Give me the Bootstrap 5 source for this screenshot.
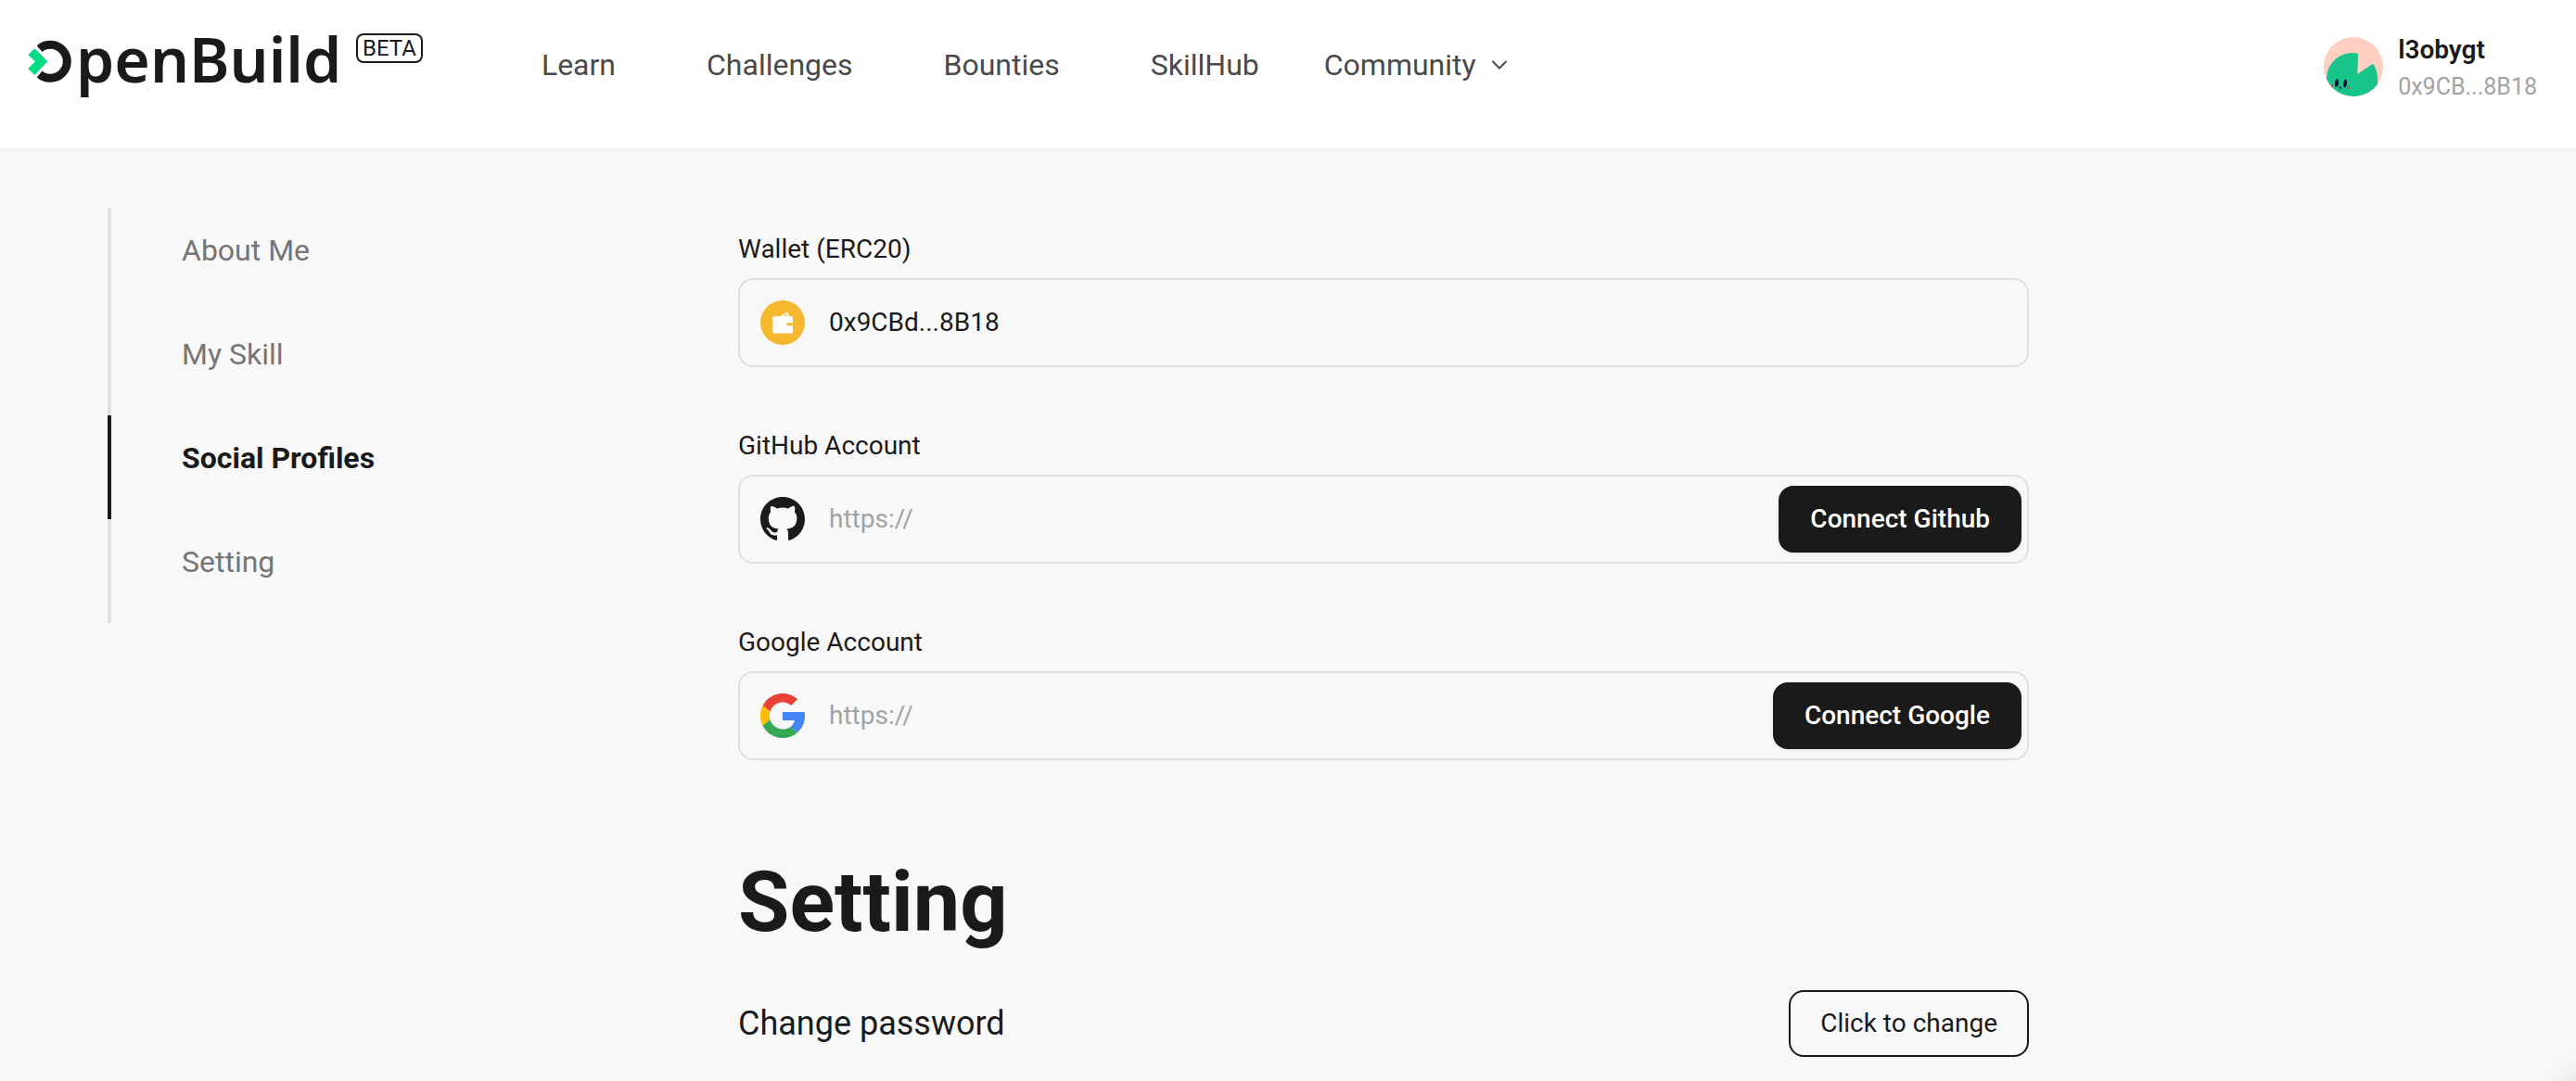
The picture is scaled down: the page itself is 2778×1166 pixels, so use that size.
<!DOCTYPE html>
<html lang="en">
<head>
<meta charset="utf-8">
<meta name="viewport" content="width=device-width, initial-scale=1">
<title>OpenBuild - Social Profiles</title>
<link href="https://cdn.jsdelivr.net/npm/bootstrap@5.3.0/dist/css/bootstrap.min.css" rel="stylesheet">
<style>
  :root { --ink: #1a1a1a; --line: #e1e1e1; --page: #f8f8f8; }
  body { font-family: Roboto, "Open Sans", sans-serif; font-size: 28px; color: var(--ink); background: var(--page); min-height: 100vh; }

  .topbar { height: 162px; padding: 16px 42px 0 30px; border-bottom: 2px solid #f0f0f0; }
  .brand-logo { width: 338px; height: 96px; display: block; overflow: visible; }
  .brand-logo text { font-family: "Noto Sans", sans-serif; font-weight: 600; font-size: 66px; fill: var(--ink); }
  .beta-tag { height: 32px; margin-top: 20px; padding: 0 5px; border: 2px solid var(--ink); border-radius: 8px; font-size: 24px; line-height: 29px; color: var(--ink); }
  .main-nav { gap: 98px; margin-left: 128px; line-height: 48px; font-size: 32px; margin-top: 30px; }
  .main-nav a, .main-nav button { color: #4a4a4a; text-decoration: none; }
  .main-nav button { font-size: 32px; line-height: 48px; margin-left: -28px; gap: 16px; }
  .user-box { gap: 16px; margin-top: 20px; }
  .user-box svg { margin-top: 4px; }
  .user-name { font-weight: 600; line-height: 36px; }
  .user-addr { font-size: 25px; line-height: 40px; margin-top: 2px; color: #a3a3a3; }

  .page-body { padding: 62px 116px 24px; }
  .side-nav { flex: 0 0 680px; }
  .side-nav a { display: block; height: 112px; padding: 22px 0 0 76px; border-left: 4px solid var(--line); font-size: 32px; line-height: 48px; color: #757575; text-decoration: none; }
  .side-nav a.active { border-color: var(--ink); color: var(--ink); font-weight: 700; }

  .settings-col { max-width: 1392px; padding-top: 24px; }
  .field-group { margin-bottom: 64px; }
  .field-group label { display: block; line-height: 42px; margin-bottom: 10px; }
  .field-box { height: 96px; border: 2px solid var(--line); border-radius: 16px; padding: 0 6px 0 22px; gap: 26px; }
  .field-box input { color: var(--ink); font-size: 28px; outline: 0; min-width: 0; }
  .field-box input::placeholder { color: #a3a3a3; opacity: 1; }
  .act-btn { height: 72px; border-radius: 16px; font-size: 28px; padding: 0 34px; border: 0; white-space: nowrap; }
  .act-dark { background: var(--ink); color: #fff; font-weight: 500; box-shadow: 0 2px 4px rgba(0,0,0,.06); }
  .act-line { border: 2px solid var(--ink); color: var(--ink); padding: 0 32px; }
  .section-title { font-size: 90px; line-height: 96px; font-weight: 700; margin: 106px 0 46px; }
  .row-title { font-size: 36px; line-height: 54px; font-weight: 400; }
  .chat-launcher { position: fixed; right: -48px; bottom: -48px; width: 48px; height: 48px; border-radius: 50%; box-shadow: 0 0 40px rgba(0,0,0,.3); }
</style>
</head>
<body>
<header class="topbar bg-white d-flex align-items-start">
  <a href="#" class="d-flex align-items-start text-decoration-none" aria-label="OpenBuild home">
    <svg class="brand-logo" viewBox="30 16 338 96">
      <path d="M42.6 52.6A18 18 0 1 1 42.6 80" fill="none" stroke="#1a1a1a" stroke-width="9"/>
      <path d="M30.300 59.300l7-7 14 14-14 14.700-7-7 7.700-7.700z" fill="#00dc82"/>
      <text x="82" y="89">penBuild</text>
    </svg>
    <span class="beta-tag ms-3">BETA</span>
  </a>
  <nav class="main-nav d-flex">
    <a href="#">Learn</a>
    <a href="#">Challenges</a>
    <a href="#">Bounties</a>
    <a href="#">SkillHub</a>
    <button type="button" class="border-0 bg-transparent p-0 d-flex align-items-center">Community
      <svg width="18" height="12" viewBox="0 0 18 12" fill="none" stroke="#4a4a4a" stroke-width="2"><path d="M1.500 2l7.500 7.500L16.500 2"/></svg>
    </button>
  </nav>
  <div class="user-box d-flex ms-auto">
    <svg width="64" height="64" viewBox="0 0 64 64" role="img" aria-label="Avatar">
      <clipPath id="face"><circle cx="32" cy="32" r="32"/></clipPath>
      <g clip-path="url(#face)">
        <path fill="#ffd0c2" d="M0 0h64v64H0z"/>
        <path fill="#17c58b" d="M37 17.800L36.300 40 53 28.700A27.500 27.500 0 0 1 58 44.500V64H3V44.500A27.500 27.500 0 0 1 37 17.800z"/>
        <ellipse cx="14" cy="49.500" rx="1.900" ry="4.200" fill="#0b0b3a" transform="rotate(8 14 49.500)"/>
        <ellipse cx="23" cy="50" rx="1.900" ry="4.200" fill="#0b0b3a" transform="rotate(8 23 50)"/>
        <path d="M16 54.500q1.500-1.500 2.800 0q-.5 2-1.500 2.200" fill="none" stroke="#0b0b3a"/>
        <circle cx="9" cy="52.700" r="1.300" fill="#f33"/><circle cx="26.300" cy="55" r="1.300" fill="#f33"/>
      </g>
    </svg>
    <div>
      <div class="user-name">l3obygt</div>
      <div class="user-addr">0x9CB...8B18</div>
    </div>
  </div>
</header>

<div class="page-body d-flex align-items-start">
  <nav class="side-nav">
    <a href="#about">About Me</a>
    <a href="#skill">My Skill</a>
    <a href="#social" class="active" aria-current="true">Social Profiles</a>
    <a href="#setting">Setting</a>
  </nav>
  <main class="settings-col flex-grow-1">
    <div class="field-group">
      <label for="wallet">Wallet (ERC20)</label>
      <div class="field-box d-flex align-items-center">
        <svg width="48" height="48" viewBox="0 0 48 48" class="flex-shrink-0">
          <circle cx="24" cy="24" r="24" fill="#f4b92e"/>
          <path fill="#fff" d="M15 17h6.500l6-3.800q1.500-.7 2.300.6l1.200 3.200H33q2 0 2 2v5.200h-5.300a1.500 1.500 0 0 0 0 3H35V33.500q0 2-2 2H15q-2 0-2-2V19q0-2 2-2z"/>
          <path fill="#f4b92e" d="M24.500 17l3.400-2.200.9 2.200z"/>
        </svg>
        <input id="wallet" type="text" class="border-0 bg-transparent p-0 flex-grow-1" value="0x9CBd...8B18" readonly>
      </div>
    </div>
    <div class="field-group">
      <label for="github">GitHub Account</label>
      <div class="field-box d-flex align-items-center">
        <svg width="48" height="48" viewBox="0 0 16 16" fill="#1a1a1a" class="flex-shrink-0"><path d="M8 0C3.580 0 0 3.580 0 8c0 3.540 2.290 6.530 5.470 7.590.4.070.55-.17.55-.38 0-.19-.01-.82-.01-1.490-2.010.37-2.530-.49-2.690-.94-.09-.23-.48-.94-.82-1.130-.28-.15-.68-.52-.01-.53.63-.01 1.080.58 1.230.82.72 1.210 1.870.87 2.330.66.070-.52.28-.87.51-1.070-1.780-.2-3.640-.89-3.640-3.950 0-.87.31-1.590.82-2.150-.08-.2-.36-1.020.08-2.120 0 0 .67-.21 2.200.82.64-.18 1.320-.27 2-.27s1.360.09 2 .27c1.530-1.040 2.200-.82 2.200-.82.44 1.100.16 1.920.08 2.120.51.56.82 1.270.82 2.150 0 3.070-1.870 3.750-3.650 3.950.29.25.54.73.54 1.480 0 1.070-.01 1.930-.01 2.200 0 .21.15.46.55.38A8.010 8.010 0 0 0 16 8c0-4.420-3.580-8-8-8"/></svg>
        <input id="github" type="text" class="border-0 bg-transparent p-0 flex-grow-1" placeholder="https://">
        <button type="button" class="btn act-btn act-dark">Connect Github</button>
      </div>
    </div>
    <div class="field-group">
      <label for="google">Google Account</label>
      <div class="field-box d-flex align-items-center">
        <svg width="48" height="48" viewBox="0 0 48 48" class="flex-shrink-0">
          <path fill="#ea4335" d="M24 9.500c3.540 0 6.710 1.220 9.210 3.600l6.850-6.850C35.900 2.380 30.470 0 24 0 14.620 0 6.510 5.380 2.560 13.220l7.980 6.190C12.430 13.720 17.740 9.500 24 9.500z"/>
          <path fill="#4285f4" d="M48 24.550c0-1.570-.15-3.090-.38-4.550H24v9.020h12.940c-.58 2.960-2.260 5.480-4.780 7.180l7.730 6C44.400 38.020 48 31.840 48 24.550z"/>
          <path fill="#fbbc05" d="M10.530 28.590c-.48-1.450-.76-2.990-.76-4.590s.27-3.140.76-4.590l-7.980-6.190C.92 16.460 0 20.120 0 24c0 3.880.92 7.540 2.560 10.780l7.970-6.190z"/>
          <path fill="#34a853" d="M24 48c6.480 0 11.930-2.130 15.890-5.810l-7.730-6c-2.150 1.450-4.920 2.300-8.160 2.300-6.260 0-11.570-4.220-13.470-9.910l-7.980 6.190C6.510 42.620 14.620 48 24 48z"/>
        </svg>
        <input id="google" type="text" class="border-0 bg-transparent p-0 flex-grow-1" placeholder="https://">
        <button type="button" class="btn act-btn act-dark">Connect Google</button>
      </div>
    </div>

    <h1 class="section-title" id="setting">Setting</h1>
    <div class="d-flex align-items-center justify-content-between">
      <h2 class="row-title mb-0">Change password</h2>
      <button type="button" class="btn act-btn act-line">Click to change</button>
    </div>
  </main>
</div>
<div class="chat-launcher" aria-hidden="true"></div>
<script src="https://cdn.jsdelivr.net/npm/bootstrap@5.3.0/dist/js/bootstrap.bundle.min.js"></script>
</body>
</html>
